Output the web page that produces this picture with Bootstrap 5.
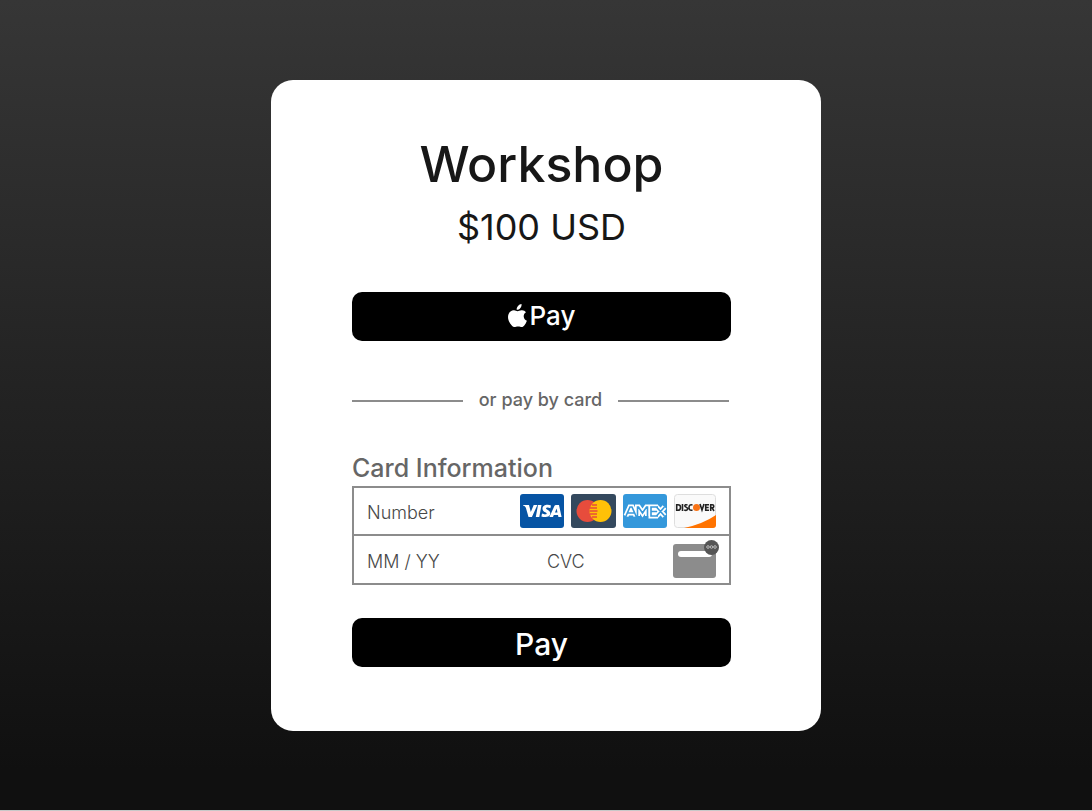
<!DOCTYPE html>
<html lang="en">
<head>
<meta charset="utf-8">
<meta name="viewport" content="width=device-width, initial-scale=1">
<title>Workshop checkout</title>
<link href="https://cdn.jsdelivr.net/npm/bootstrap@5.3.0/dist/css/bootstrap.min.css" rel="stylesheet">
<style>
  body { font-family: Inter, sans-serif; background: linear-gradient(#363636, #101010 95%); border-bottom: 1px solid #c8c8c8; color: #171717; }
  .checkout { max-width: 550px; border-radius: 22px; padding: 56px 90px 64px 81px; }
  .product { font-size: 50px; line-height: 56px; font-weight: 500; }
  .price { font-size: 36px; line-height: 44px; font-weight: 400; margin-top: 13px; }
  .btn-pay { height: 49px; border-radius: 10px; background: #000; color: #fff; font-size: 30px; line-height: 40px; font-weight: 500; }
  .btn-pay:hover { background: #222; color: #fff; }
  .btn-apple { font-size: 26px; gap: 3px; margin-top: 43px; }
  .btn-card { margin-top: 33px; padding: 4px 0 0; }
  .divider { margin-top: 47px; padding-right: 2px; gap: 16px; font-size: 18px; line-height: 24px; font-weight: 500; color: #666; }
  .divider-line { height: 2px; margin-top: 2px; background: #8c8c8c; }
  .card-title-text { margin-top: 39px; font-size: 25px; line-height: 34px; font-weight: 500; color: #666; }
  .fields { border: 2px solid #8c8c8c; margin-top: 1px; }
  .field-row { height: 46px; padding: 0 13px; }
  .field-row + .field-row { height: 49px; padding-right: 10px; border-top: 2px solid #8c8c8c; }
  .field { min-width: 0; border: 0; padding: 5px 0 0; background: none; outline: 0; font-size: 18px; line-height: 24px; font-weight: 300; color: #484848; }
  .field::placeholder { color: #484848; opacity: 1; }
  .brands { gap: 7px; }
</style>
</head>
<body class="min-vh-100 d-flex align-items-center justify-content-center">
<main class="checkout bg-white w-100">
  <h1 class="product text-center mb-0">Workshop</h1>
  <p class="price text-center mb-0">$100 USD</p>
  <button type="button" class="btn btn-pay btn-apple w-100 border-0 p-0 d-flex align-items-center justify-content-center" aria-label="Apple Pay">
    <svg width="19" height="24" viewBox="0 0 19 24" fill="#fff" aria-hidden="true"><path d="M13.500 0c.3 1.800-.4 3.200-1.300 4.200-.9 1.100-2.200 1.700-3.500 1.600-.2-1.600.5-3 1.300-3.900C10.900.9 12.300.1 13.500 0ZM9.700 7.200c.8 0 2.300-1.200 4.300-1 1.700.1 3.100.8 4 2.100-3.500 2.200-2.900 7 .9 8.500-.7 2-1.600 3.600-2.800 5-2 2.200-3.300.7-5.900.7-2.800 0-3.900 1.600-6-.5C.3 18.100-.8 13.300.6 10c1.200-2.500 3.300-3.800 5.400-3.700 1.500.1 2.500.9 3.700.9Z"/></svg>
    <span>Pay</span>
  </button>
  <div class="divider d-flex align-items-center">
    <span class="divider-line flex-fill"></span><span>or pay by card</span><span class="divider-line flex-fill"></span>
  </div>
  <form>
    <h2 class="card-title-text mb-0">Card Information</h2>
    <div class="fields">
      <div class="field-row d-flex align-items-center">
        <input class="field flex-fill" type="text" inputmode="numeric" placeholder="Number" aria-label="Card number">
        <div class="brands d-flex flex-shrink-0">
          <svg width="44" height="34" viewBox="0 0 44 34" role="img" aria-label="Visa"><rect width="44" height="34" rx="3" fill="#0654a4"/><path fill="#fff" d="M3 11h6l1.800 7 2.900-7h3.700l-5.500 12H8.500L6 14.200C5.500 12.500 4 11.800 3 11.500ZM18 11h3.500l-2.200 12h-3.500ZM31 11.500l-.6 2.700c-2.700-1.200-4.300-.6-4.300.2 0 1.300 4.200 1.700 4.200 4.900 0 3.800-4.800 4.600-8.900 3.100l.6-2.800c2.500 1.200 4.700.9 4.700-.1 0-1.300-4.200-1.500-4.200-4.800 0-3.700 4.900-4.800 8.500-3.200ZM36 11h3l2.600 12h-3.200l-.4-2h-4.200l-.8 2h-3.600l5-11c.3-.6.800-1 1.600-1Zm.6 3.500-1.600 4.100h2.500Z"/></svg>
          <svg width="45" height="34" viewBox="0 0 45 34" role="img" aria-label="Mastercard"><rect width="45" height="34" rx="3" fill="#34495e"/><circle cx="16.500" cy="17" r="11" fill="#e74c3c"/><circle cx="29.500" cy="17" r="11" fill="#ffc107"/><path stroke="#e74c3c" stroke-width="1.300" d="M21 11h5M19 14h7M18.500 17h8M19 20h7M21 23h5"/></svg>
          <svg width="44" height="34" viewBox="0 0 44 34" role="img" aria-label="American Express"><rect width="44" height="34" rx="3" fill="#3498db"/><g fill="none"><path stroke="#fff" stroke-width="5" d="M3 22 7 13h2l4 9M5 19h6M14.500 22v-9h1l4 6 4-6h1v9M35 13h-7v9h7M28 17.500h6M33.500 13l8 9M41.500 13l-8 9"/><path stroke="#3498db" stroke-width="1.600" d="M3 22 7 13h2l4 9M5 19h6M14.500 22v-9h1l4 6 4-6h1v9M35 13h-7v9h7M28 17.500h6M33.500 13l8 9M41.500 13l-8 9"/></g></svg>
          <svg width="42" height="34" viewBox="0 0 42 34" role="img" aria-label="Discover"><rect x=".5" y=".5" width="41" height="33" rx="3" fill="#fafafa" stroke="#dedede"/><path fill="#ff7300" d="M10 34Q29 30 42 21v10q0 3-3 3Z"/><circle cx="22.500" cy="13.500" r="3.500" fill="#f97316"/><g fill="none" stroke="#222" stroke-width="1.600"><path d="M2.700 10.700v5.600H4q2.500 0 2.500-2.800T4 10.700ZM8.500 10v7M13.500 11q-2.700-.8-2.700.8c0 1.500 2.800 1.200 2.800 3s-2 1.900-3.400 1M18.500 11q-3.500-1-3.500 2.500t3.500 2.500M26 10l2 6 2-6M35 10.700h-3.300v5.600H35M31.700 13.500h3M36.700 17v-6.300h1.600q1.500 0 1.500 1.500t-1.500 1.500h-1.600M38 13.700l2 3.300"/></g></svg>
        </div>
      </div>
      <div class="field-row d-flex align-items-center">
        <input class="field col-6" type="text" inputmode="numeric" placeholder="MM / YY" aria-label="Expiry date">
        <input class="field flex-fill ms-1" type="text" inputmode="numeric" placeholder="CVC" aria-label="Security code">
        <svg class="flex-shrink-0" width="46" height="38" viewBox="0 0 46 38" aria-hidden="true"><rect y="4" width="43" height="34" rx="3" fill="#8c8c8c"/><rect x="5" y="11" width="34" height="6" rx="3" fill="#fff"/><circle cx="38.500" cy="7.500" r="7.500" fill="#555"/><g fill="none" stroke="#bbb"><circle cx="35" cy="7" r="1.300"/><circle cx="38.500" cy="7" r="1.300"/><circle cx="42" cy="7" r="1.300"/></g></svg>
      </div>
    </div>
    <button type="button" class="btn btn-pay btn-card w-100 border-0">Pay</button>
  </form>
</main>
<script src="https://cdn.jsdelivr.net/npm/bootstrap@5.3.0/dist/js/bootstrap.bundle.min.js"></script>
</body>
</html>
